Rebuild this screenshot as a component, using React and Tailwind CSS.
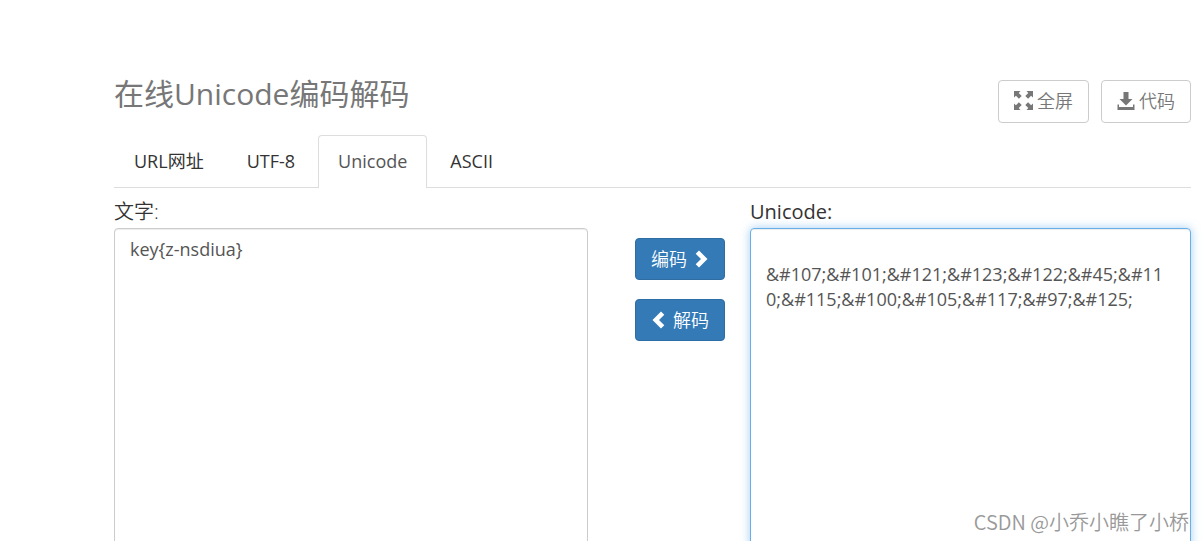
const tabs = ['URL网址', 'UTF-8', 'Unicode', 'ASCII'];

const encoded =
  '\n&#107;&#101;&#121;&#123;&#122;&#45;&#110;&#115;&#100;&#105;&#117;&#97;&#125;';

function FullscreenIcon() {
  return (
    <svg viewBox="0 0 19 19" className="size-[19px]" fill="currentColor" aria-hidden="true">
      <path d="M0 0h6.500L4.700 1.900 7.700 4.900 4.900 7.700 1.900 4.700 0 6.500z" />
      <path d="M19 0v6.500L17.100 4.700 14.100 7.700 11.300 4.900 14.300 1.900 12.500 0z" />
      <path d="M0 19v-6.500L1.900 14.300 4.900 11.300 7.700 14.100 4.700 17.100 6.500 19z" />
      <path d="M19 19h-6.500L14.300 17.100 11.300 14.100 14.100 11.300 17.100 14.300 19 12.500z" />
    </svg>
  );
}

function DownloadIcon() {
  return (
    <svg viewBox="0 0 18 18" className="size-[18px]" fill="currentColor" aria-hidden="true">
      <path d="M6.500 0h5v7h4L9 13.500 2.500 7h4z" />
      <path d="M0.500 12.500H2v2.500h14v-2.500h1.500V18h-17z" />
    </svg>
  );
}

function ChevronIcon({ left }) {
  return (
    <svg viewBox="0 0 14 18" className="h-[18px] w-[14px]" fill="currentColor" aria-hidden="true">
      <path d={left ? 'M10 .500l3.300 3.300L8 9l5.300 5.200L10 17.500 1.500 9z' : 'M4 .500L.700 3.800 6 9 .700 14.200 4 17.500 12.500 9z'} />
    </svg>
  );
}

function ToolButton({ icon, children }) {
  return (
    <button
      type="button"
      className="flex h-[43px] items-center gap-1 rounded border border-[#ccc] bg-white px-[15px] pb-0.5 text-lg font-[350] text-[#777]"
    >
      {icon}
      {children}
    </button>
  );
}

function ConvertButton({ children }) {
  return (
    <button
      type="button"
      className="flex h-[42px] w-[90px] items-center justify-center gap-2 rounded border border-[#2e6da4] bg-[#337ab7] text-lg font-[350] text-white"
    >
      {children}
    </button>
  );
}

export default function App() {
  return (
    <main className="relative h-screen overflow-hidden bg-white pt-20 pr-[13px] pl-[114px] font-['Open_Sans','Noto_Sans_CJK_SC',sans-serif] text-[#333]">
      <header className="flex h-[55px] items-start justify-between">
        <h1 className="text-[30px] leading-7 text-[#777]">在线Unicode编码解码</h1>
        <div className="flex gap-3">
          <ToolButton icon={<FullscreenIcon />}>全屏</ToolButton>
          <ToolButton icon={<DownloadIcon />}>代码</ToolButton>
        </div>
      </header>

      <nav className="flex h-[53px] gap-[3px] border-b border-[#ddd] text-lg">
        {tabs.map((tab) => (
          <a
            key={tab}
            href={'#' + tab}
            className={
              tab === 'Unicode'
                ? 'flex h-[53px] items-center rounded-t border border-b-0 border-[#ddd] bg-white px-[19px] pb-0.5 text-[#555]'
                : 'flex h-[53px] items-center px-5 pb-0.5'
            }
          >
            {tab}
          </a>
        ))}
      </nav>

      <div className="grid grid-cols-[474fr_162fr_441fr] pt-[10px]">
        <div className="flex flex-col">
          <label htmlFor="plain" className="h-[30px] text-xl leading-7 font-[350]">
            文字:
          </label>
          <textarea
            id="plain"
            defaultValue="key{z-nsdiua}"
            className="h-[400px] w-full resize-none rounded border border-[#ccc] px-[15px] py-2 text-lg leading-[25px] text-[#555] shadow-[inset_0_1px_1px_rgba(0,0,0,0.075)] outline-none"
          />
        </div>
        <div className="flex flex-col items-end gap-[19px] pt-10 pr-[25px]">
          <ConvertButton>
            编码
            <ChevronIcon />
          </ConvertButton>
          <ConvertButton>
            <ChevronIcon left />
            解码
          </ConvertButton>
        </div>
        <div className="flex flex-col">
          <label htmlFor="unicode" className="h-[30px] text-xl leading-7">
            Unicode:
          </label>
          <textarea
            id="unicode"
            defaultValue={encoded}
            className="h-[400px] w-full resize-none rounded border border-[#66afe9] px-[15px] py-2 text-lg leading-[25px] break-all text-[#555] shadow-[inset_0_1px_1px_rgba(0,0,0,0.075),0_0_10px_rgba(102,175,233,0.6)] outline-none"
          />
        </div>
      </div>

      <p className="absolute right-[15px] bottom-[5px] font-['Noto_Sans_CJK_SC',sans-serif] text-xl font-[350] text-[#999]">
        CSDN @小乔小瞧了小桥
      </p>
    </main>
  );
}
